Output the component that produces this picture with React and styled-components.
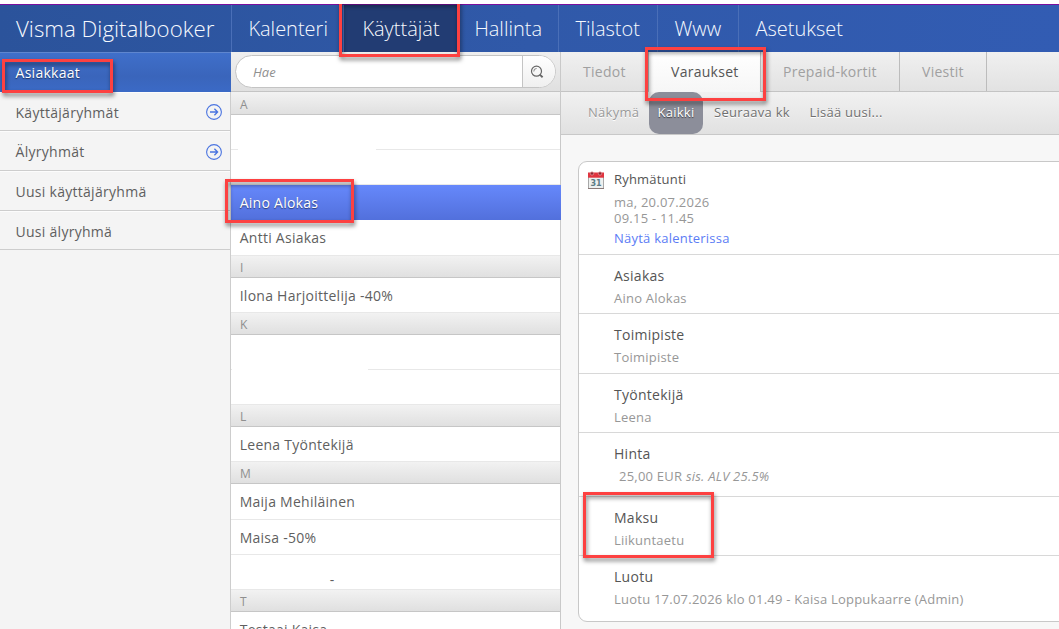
import React from 'react';
import styled, { createGlobalStyle, css } from 'styled-components';

const GlobalStyle = createGlobalStyle`
  * {
    box-sizing: border-box;
  }

  body {
    margin: 0;
    background: #f7f7f7;
    color: #5f5f5f;
    font-family: 'Open Sans', sans-serif;
    font-size: 14px;
    overflow: hidden;
  }

  ul {
    list-style: none;
    margin: 0;
    padding: 0;
  }
`;

const Page = styled.div`
  display: flex;
  flex-direction: column;
  height: 629px;
  overflow: hidden;
  border-top: 4px solid #fff;
`;

// red frame laid over the element it marks
const Marker = styled.span`
  position: absolute;
  z-index: 5;
  top: ${({ $top }) => $top}px;
  left: ${({ $left }) => $left}px;
  width: ${({ $width }) => $width}px;
  height: ${({ $height }) => $height}px;
  border: 3px solid #fd4141;
  filter: drop-shadow(1px 3px 2px rgba(0, 0, 0, 0.5));
  pointer-events: none;
`;

const Header = styled.header`
  display: flex;
  flex: none;
  height: 48px;
  border-top: 1px solid #7a0f9e;
  background: linear-gradient(to right, #2b539b, #3059a9 50%, #325cb3);
  color: #f6f9fe;
  font-weight: 300;
  font-size: 20px;
  line-height: 47px;
  white-space: nowrap;
`;

const Brand = styled.div`
  width: 231px;
  padding-left: 16px;
  font-size: 22.3px;
`;

const NavItem = styled.a`
  position: relative;
  width: ${({ $width }) => $width}px;
  padding-left: 16.4px;
  border-left: 1px solid #4a6fb8;

  ${({ $active }) =>
    $active &&
    css`
      padding-left: 18.4px;
      background: #223c73;
    `}
`;

const Columns = styled.div`
  display: flex;
  flex: 1;
  min-height: 0;
`;

const Sidebar = styled.nav`
  flex: none;
  width: 231px;
  background: #f4f4f4;
  box-shadow: inset -1px 0 #cdcdcd;
`;

const SideItem = styled.a`
  position: relative;
  display: flex;
  align-items: center;
  justify-content: space-between;
  height: ${({ $height }) => $height}px;
  margin-right: 1px;
  padding: 1px 8px 0 15.5px;
  border-top: 1px solid #fcfcfc;
  border-bottom: 1px solid #cdcdcd;
  letter-spacing: 0.28px;

  ${({ $active }) =>
    $active &&
    css`
      margin-right: 0;
      border-top-color: #5f86cf;
      border-bottom: 0;
      background: linear-gradient(#3f6fca, #3a65bb 60%, #3b6ac6);
      color: #fff;
      text-shadow: 0 1px 1px rgba(0, 0, 0, 0.5);
      padding-top: 0;
    `}
`;

const People = styled.section`
  flex: none;
  width: 330px;
  border-right: 1px solid #c9c9c9;
  background: #fff;
`;

const SearchBar = styled.div`
  height: 40px;
  padding: 3px 4px;
  border-bottom: 1px solid #c4c4c4;
  background: linear-gradient(#efefef, #e0e0e0);
`;

const SearchField = styled.div`
  display: flex;
  height: 33px;
  border: 1px solid #c4c4c4;
  border-radius: 17px;
  background: #fff;
  overflow: hidden;
`;

const SearchInput = styled.div`
  flex: 1;
  padding-left: 17px;
  color: #909090;
  font-style: italic;
  font-size: 13px;
  line-height: 32px;
`;

const SearchButton = styled.div`
  display: flex;
  align-items: center;
  width: 33px;
  padding-left: 7px;
  border-left: 1px solid #c4c4c4;
  background: linear-gradient(#fff, #efefef);
`;

const GroupHeader = styled.li`
  display: flex;
  align-items: flex-end;
  height: ${({ $height }) => $height || 22}px;
  padding: 0 9px;
  border-bottom: 1px solid #c6c6c6;
  background: linear-gradient(#f2f2f2, #e0e0e0);
  color: #8f8f8f;
  font-size: 12px;
  line-height: 19px;
`;

const Person = styled.li`
  position: relative;
  height: ${({ $height }) => $height || 35}px;
  padding: 1px 8.7px 0;
  border-bottom: 1px solid #e8e8e8;
  line-height: 34px;
  letter-spacing: 0.26px;
  white-space: pre;

  ${({ $selected }) =>
    $selected &&
    css`
      width: 330px;
      border-bottom: 0;
      background: linear-gradient(#6688fb, #5270dc);
      color: #fff;
      text-shadow: 0 1px 1px rgba(0, 0, 0, 0.5);
    `}
`;

// hides a name together with a piece of the line under it
const Blank = styled.span`
  position: absolute;
  top: 2px;
  left: ${({ $left }) => $left}px;
  width: ${({ $width }) => $width}px;
  height: 34px;
  background: #fff;
`;

const Dash = styled.span`
  display: block;
  padding: 7px 0 0 90px;
`;

const Detail = styled.main`
  display: flex;
  flex: 1;
  flex-direction: column;
  min-width: 0;
`;

const Tabs = styled.div`
  display: flex;
  flex: none;
  height: 40px;
  border-bottom: 1px solid #c4c4c4;
  background: linear-gradient(#f0f0f0, #e2e2e2);
  font-size: 14px;
  line-height: 40px;
`;

const Tab = styled.a`
  position: relative;
  width: ${({ $width }) => $width}px;
  padding-left: 22px;
  border-right: 1px solid #bcbcbc;
  color: #a0a0a0;
  letter-spacing: 0.28px;

  ${({ $active }) =>
    $active &&
    css`
      height: 40px;
      background: linear-gradient(#fff, #f6f6f6);
      color: #555;
    `}
`;

const Filters = styled.div`
  display: flex;
  flex: none;
  height: 43px;
  padding-left: 27px;
  border-bottom: 1px solid #c8c8c8;
  background: linear-gradient(#f1f1f1, #e1e1e1);
  color: #707070;
  font-size: 13px;
  letter-spacing: 0.27px;
  line-height: 41px;
  text-shadow: 0 1px #fff;
`;

const FilterLabel = styled.span`
  width: 61px;
  color: #9a9a9a;
`;

const Filter = styled.a`
  margin-right: ${({ $active }) => ($active ? 11 : 19.5)}px;

  ${({ $active }) =>
    $active &&
    css`
      width: 54px;
      height: 42px;
      border-radius: 10px;
      background: #8c8e9a;
      color: #fff;
      text-align: center;
      text-shadow: 0 1px 1px rgba(0, 0, 0, 0.6);
    `}
`;

const Card = styled.div`
  margin: 26px -10px 0 17px;
  border: 1px solid #c8c8c8;
  border-radius: 9px;
  background: #fff;
`;

const FieldTitle = styled.div`
  margin-bottom: 4px;
  color: #555;
  font-size: 14px;
  letter-spacing: 0.27px;
  line-height: 20px;
`;

const Field = styled.div`
  position: relative;
  height: ${({ $height }) => $height}px;
  padding: 11px 0 0 35px;
  border-bottom: 1px solid #d8d8d8;
  color: #979797;
  font-size: 13px;
  letter-spacing: 0.23px;
  line-height: 16px;

  &:first-child {
    padding-top: 7px;
  }

  &:first-child ${FieldTitle} {
    margin-bottom: 5px;
    font-size: 13px;
    letter-spacing: 0.2px;
  }

  &:last-child {
    border-bottom: 0;
  }
`;

const CalendarLink = styled.a`
  display: block;
  margin-top: 4px;
  color: #5b7cf5;
`;

const Price = styled.span`
  padding-left: 5px;
`;

const CalendarIcon = styled.svg`
  position: absolute;
  top: 9px;
  left: 9px;
`;

const NAV = [
  { label: 'Kalenteri', width: 112 },
  { label: 'Käyttäjät', width: 114, active: true },
  { label: 'Hallinta', width: 101 },
  { label: 'Tilastot', width: 99 },
  { label: 'Www', width: 81 },
  { label: 'Asetukset', width: 120 },
];

const SIDE = [
  { label: 'Käyttäjäryhmät', height: 39, arrow: true },
  { label: 'Älyryhmät', height: 40, arrow: true },
  { label: 'Uusi käyttäjäryhmä', height: 40 },
  { label: 'Uusi älyryhmä', height: 39 },
];

const GROUPS = [
  {
    letter: 'A',
    height: 23,
    people: [
      { blank: [7, 138] },
      {},
      { name: 'Aino Alokas', selected: true },
      { name: 'Antti Asiakas', height: 36 },
    ],
  },
  { letter: 'I', people: [{ name: 'Ilona Harjoittelija -40%' }] },
  { letter: 'K', people: [{ blank: [1, 136] }, {}] },
  { letter: 'L', people: [{ name: 'Leena Työntekijä' }] },
  {
    letter: 'M',
    people: [{ name: 'Maija Mehiläinen', height: 36 }, { name: 'Maisa -50%' }, { dash: true }],
  },
  { letter: 'T', people: [{ name: 'Testaaj Kaisa' }] },
];

const ArrowIcon = () => (
  <svg width="16" height="16" viewBox="0 0 16 16" fill="none" stroke="#4a74e0">
    <circle cx="8" cy="8" r="7.4" strokeWidth="1.1" />
    <path d="M4 8h7.6M8.4 4.8 11.6 8l-3.2 3.2" strokeWidth="1.3" />
  </svg>
);

const SearchIcon = () => (
  <svg width="14" height="14" viewBox="0 0 14 14" fill="none" stroke="#666">
    <circle cx="6.5" cy="6.2" r="5" strokeWidth="1.2" />
    <path d="M3.8 6.5a2.8 2.8 0 0 1 2.8-3" strokeWidth="0.8" />
    <path d="m9.8 9.6 2.8 2.6" strokeWidth="1.9" />
  </svg>
);

const Calendar = () => (
  <CalendarIcon width="16" height="18" viewBox="0 0 16 18">
    <rect x="0.5" y="3" width="15" height="14.5" fill="#eef0ef" stroke="#a8a8a8" />
    <path d="M0 1.5h16v5.2H0z" fill="#e0343f" />
    <path d="M0 17.5h16" stroke="#8a7a78" />
    <g fill="#8d2530" stroke="#e9a0a5" strokeWidth="0.7">
      <circle cx="4" cy="2.5" r="1.7" />
      <circle cx="12" cy="2.5" r="1.7" />
    </g>
    <text
      x="8"
      y="15"
      textAnchor="middle"
      fontFamily="DejaVu Sans"
      fontWeight="bold"
      fontSize="8"
      letterSpacing="0"
      fill="#5c7c86"
    >
      31
    </text>
  </CalendarIcon>
);

const App = () => (
  <>
    <GlobalStyle />
    <Page>
      <Header>
        <Brand>Visma Digitalbooker</Brand>
        {NAV.map(({ label, width, active }) => (
          <NavItem key={label} $width={width} $active={active}>
            {label}
            {active && <Marker $top={-5} $left={-5} $width={121} $height={57} />}
          </NavItem>
        ))}
      </Header>

      <Columns>
        <Sidebar>
          <SideItem $height={40} $active>
            Asiakkaat
            <Marker $top={6} $left={2} $width={111} $height={34} />
          </SideItem>
          {SIDE.map(({ label, height, arrow }) => (
            <SideItem key={label} $height={height}>
              {label}
              {arrow && <ArrowIcon />}
            </SideItem>
          ))}
        </Sidebar>

        <People>
          <SearchBar>
            <SearchField>
              <SearchInput>Hae</SearchInput>
              <SearchButton>
                <SearchIcon />
              </SearchButton>
            </SearchField>
          </SearchBar>
          <ul>
            {GROUPS.map(({ letter, height, people }) => (
              <React.Fragment key={letter}>
                <GroupHeader $height={height}>{letter}</GroupHeader>
                {people.map((person, i) => (
                  <Person key={i} $height={person.height} $selected={person.selected}>
                    {person.name}
                    {person.blank && <Blank $left={person.blank[0]} $width={person.blank[1]} />}
                    {person.dash && <Dash>-</Dash>}
                    {person.selected && <Marker $top={-6} $left={-6} $width={129} $height={44} />}
                  </Person>
                ))}
              </React.Fragment>
            ))}
          </ul>
        </People>

        <Detail>
          <Tabs>
            <Tab $width={88}>Tiedot</Tab>
            <Tab $width={112} $active>
              Varaukset
              <Marker $top={-5} $left={-4} $width={121} $height={54} />
            </Tab>
            <Tab $width={139}>Prepaid-kortit</Tab>
            <Tab $width={87}>Viestit</Tab>
          </Tabs>
          <Filters>
            <FilterLabel>Näkymä</FilterLabel>
            <Filter $active>Kaikki</Filter>
            <Filter>Seuraava kk</Filter>
            <Filter>Lisää uusi...</Filter>
          </Filters>

          <Card>
            <Field $height={93}>
              <Calendar />
              <FieldTitle>Ryhmätunti</FieldTitle>
              ma, 20.07.2026
              <br />
              09.15 - 11.45
              <CalendarLink>Näytä kalenterissa</CalendarLink>
            </Field>
            <Field $height={59}>
              <FieldTitle>Asiakas</FieldTitle>
              Aino Alokas
            </Field>
            <Field $height={60}>
              <FieldTitle>Toimipiste</FieldTitle>
              Toimipiste
            </Field>
            <Field $height={59}>
              <FieldTitle>Työntekijä</FieldTitle>
              Leena
            </Field>
            <Field $height={64}>
              <FieldTitle>Hinta</FieldTitle>
              <Price>
                25,00 EUR <em>sis. ALV 25.5%</em>
              </Price>
            </Field>
            <Field $height={59}>
              <FieldTitle>Maksu</FieldTitle>
              Liikuntaetu
              <Marker $top={-5} $left={4} $width={131} $height={66} />
            </Field>
            <Field $height={65}>
              <FieldTitle>Luotu</FieldTitle>
              Luotu 17.07.2026 klo 01.49 - Kaisa Loppukaarre (Admin)
            </Field>
          </Card>
        </Detail>
      </Columns>
    </Page>
  </>
);

export default App;
